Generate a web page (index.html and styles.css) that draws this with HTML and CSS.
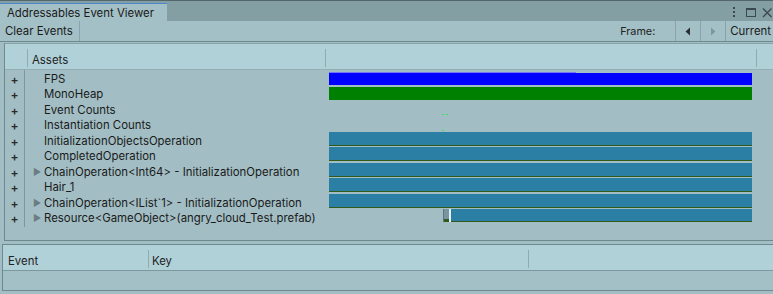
FILE: index.html
```html
<!DOCTYPE html>
<html lang="en">
<head>
    <meta charset="UTF-8">
    <title>Addressables Event Viewer</title>
    <link rel="stylesheet" href="styles.css">
</head>
<body>
    <div class="window">
        <div class="tabbar">
            <div class="tab">Addressables Event Viewer</div>
            <div class="win-controls">
                <svg width="40" height="12" viewBox="0 0 40 12">
                    <rect x="0" y="0" width="2" height="2" fill="#3a4a50"/>
                    <rect x="0" y="4" width="2" height="2" fill="#3a4a50"/>
                    <rect x="0" y="8" width="2" height="2" fill="#3a4a50"/>
                    <rect x="13.5" y="1.5" width="9" height="8" fill="none" stroke="#3a4a50" stroke-width="1"/>
                    <rect x="13" y="1" width="10" height="2" fill="#3a4a50"/>
                    <path d="M30 1.5 L38.5 10 M38.5 1.5 L30 10" stroke="#3a4a50" stroke-width="1.4"/>
                </svg>
            </div>
        </div>

        <div class="toolbar">
            <button class="tb-btn clear">Clear Events</button>
            <div class="spacer"></div>
            <span class="frame-label">Frame:</span>
            <button class="tb-btn tb-arrow">
                <svg width="6" height="9" viewBox="0 0 6 9"><path d="M5 0.5 L0.5 4.5 L5 8.5 Z" fill="#2a2f31"/></svg>
            </button>
            <button class="tb-btn tb-arrow">
                <svg width="6" height="9" viewBox="0 0 6 9"><path d="M1 0.5 L5.5 4.5 L1 8.5 Z" fill="#7d979c"/></svg>
            </button>
            <button class="tb-btn current">Current</button>
        </div>

        <div class="graph-panel">
            <div class="col-header">
                <div class="hcell plus-h"></div>
                <div class="hsep"></div>
                <div class="hcell name-h">Assets</div>
                <div class="hsep"></div>
                <div class="hcell graph-h"></div>
                <div class="hsep"></div>
            </div>
            <div class="graph-body">
                <div class="row">
                    <div class="plus">+</div>
                    <div class="name"><span class="arrow"></span>FPS</div>
                    <div class="graph">
                        <div class="bar fps">
                            <div class="fps-a"></div>
                            <div class="fps-b"></div>
                        </div>
                    </div>
                </div>
                <div class="row">
                    <div class="plus">+</div>
                    <div class="name"><span class="arrow"></span>MonoHeap</div>
                    <div class="graph"><div class="bar heap"></div></div>
                </div>
                <div class="row">
                    <div class="plus">+</div>
                    <div class="name"><span class="arrow"></span>Event Counts</div>
                    <div class="graph ticks">
                        <span class="tick"></span><span class="tick"></span>
                    </div>
                </div>
                <div class="row">
                    <div class="plus">+</div>
                    <div class="name"><span class="arrow"></span>Instantiation Counts</div>
                    <div class="graph ticks">
                        <span class="tick"></span>
                    </div>
                </div>
                <div class="row">
                    <div class="plus">+</div>
                    <div class="name"><span class="arrow"></span>InitializationObjectsOperation</div>
                    <div class="graph"><div class="bar op"></div></div>
                </div>
                <div class="row">
                    <div class="plus">+</div>
                    <div class="name"><span class="arrow"></span>CompletedOperation</div>
                    <div class="graph"><div class="bar op"></div></div>
                </div>
                <div class="row">
                    <div class="plus">+</div>
                    <div class="name"><span class="arrow">&#9654;</span>ChainOperation&lt;Int64&gt; - InitializationOperation</div>
                    <div class="graph"><div class="bar op"></div></div>
                </div>
                <div class="row">
                    <div class="plus">+</div>
                    <div class="name"><span class="arrow"></span>Hair_1</div>
                    <div class="graph"><div class="bar op"></div></div>
                </div>
                <div class="row">
                    <div class="plus">+</div>
                    <div class="name"><span class="arrow">&#9654;</span>ChainOperation&lt;IList`1&gt; - InitializationOperation</div>
                    <div class="graph"><div class="bar op"></div></div>
                </div>
                <div class="row">
                    <div class="plus">+</div>
                    <div class="name"><span class="arrow">&#9654;</span>Resource&lt;GameObject&gt;(angry_cloud_Test.prefab)</div>
                    <div class="graph">
                        <div class="bar load">
                            <div class="load-pending"></div>
                            <div class="load-mark"></div>
                            <div class="load-done"></div>
                        </div>
                    </div>
                </div>
                <div class="row-fill">
                    <div class="plus"></div>
                </div>
            </div>
        </div>

        <div class="event-panel">
            <div class="col-header">
                <div class="hcell event-h">Event</div>
                <div class="hsep"></div>
                <div class="hcell key-h">Key</div>
                <div class="hsep"></div>
            </div>
            <div class="event-body"></div>
        </div>
    </div>
</body>
</html>
```

FILE: styles.css
```css
body {
    margin: 0;
    background-color: #a2bec4;
    font-family: Inter, "Noto Sans", sans-serif;
    font-size: 11.4px;
    color: #1a1a1a;
    overflow: hidden;
}

.window {
    width: 773px;
    height: 294px;
    overflow: hidden;
}

/* tab strip */
.tabbar {
    display: flex;
    height: 20px;
    border-top: 1px solid #52676c;
    background-color: #849fa4;
}

.tab {
    margin-top: 2px;
    height: 16px;
    padding: 1px 13px 0 7px;
    border-top: 1px solid #4d86c9;
    background-color: #a3c0c6;
    line-height: 16px;
    white-space: nowrap;
}

.win-controls {
    margin-left: auto;
    padding: 6px 0 0;
    width: 40px;
}

.win-controls svg {
    display: block;
}

/* toolbar */
.toolbar {
    display: flex;
    align-items: center;
    height: 20px;
    border-bottom: 1px solid #6d8a90;
    background-color: #a3c0c6;
}

.tb-btn {
    height: 20px;
    margin: 0;
    padding: 0 5px;
    border: none;
    background: none;
    font-family: inherit;
    font-size: 11.4px;
    color: #1a1a1a;
    line-height: 20px;
    white-space: nowrap;
}

.clear {
    padding: 0 6px 0 5px;
    border-right: 1px solid #88a4aa;
}

.spacer {
    flex: 1;
}

.frame-label {
    font-size: 10.8px;
    color: #222;
    margin-right: 20px;
}

.tb-arrow {
    display: flex;
    align-items: center;
    justify-content: center;
    width: 25px;
    border-left: 1px solid #88a4aa;
}

.current {
    border-left: 1px solid #88a4aa;
    padding: 0 2px 0 4px;
}

/* column headers */
.col-header {
    display: flex;
    height: 25px;
    background-color: #b1d1d9;
}

.hcell {
    padding-top: 9px;
    line-height: 15px;
    color: #222;
    white-space: nowrap;
}

.hsep {
    align-self: flex-end;
    width: 1px;
    height: 18px;
    margin-bottom: 2px;
    background-color: #8fabb1;
}

/* graph panel */
.graph-panel {
    margin: 1px 0 0 4px;
    border-top: 1px solid #87a3a9;
    border-left: 1px solid #6d8a90;
    border-bottom: 1px solid #6d8a90;
}

.graph-panel .col-header {
    border-bottom: 1px solid #93afb5;
}

.plus-h {
    width: 22px;
}

.name-h {
    width: 293px;
    padding-left: 4px;
}

.graph-h {
    width: 430px;
}

.graph-body {
    height: 170px;
}

.row {
    display: flex;
    height: 15.45px;
}

.row-fill {
    display: flex;
    height: 3px;
}

.plus {
    flex-shrink: 0;
    width: 19px;
    border-right: 1px solid #7c989e;
    text-align: center;
    line-height: 20px;
    font-size: 12px;
    font-weight: 600;
    color: #2a2a2a;
}

.name {
    display: flex;
    flex-shrink: 0;
    width: 292px;
    padding-left: 8px;
    line-height: 18px;
    white-space: nowrap;
}

.arrow {
    flex-shrink: 0;
    width: 11px;
    font-size: 9px;
    line-height: 17px;
    color: #6b7d82;
}

.graph {
    flex-shrink: 0;
    width: 423px;
    padding-left: 4px;
}

/* bars */
.bar {
    height: 13px;
}

.fps {
    display: flex;
    margin-top: 2px;
    height: 12.5px;
}

.fps-a {
    width: 247px;
    border-top: 1px solid #7676f6;
    background-color: #0000ff;
}

.fps-b {
    flex: 1;
    margin-top: 1px;
    background-color: #0000ff;
}

.heap {
    margin-top: 1.5px;
    background-color: #008000;
}

.op {
    border-bottom: 1px solid #2f5a17;
    background-color: #2b7fa5;
}

.ticks {
    display: flex;
    align-items: flex-end;
    padding-left: 117px;
    width: 310px;
    gap: 2px;
}

.tick {
    width: 2px;
    height: 1px;
    margin-bottom: 1px;
    background-color: #3fe05a;
}

.load {
    display: flex;
    margin-left: 114px;
}

.load-pending {
    width: 5px;
    border-left: 1px solid #5d777d;
    background: linear-gradient(to bottom, #7995a0 75%, #2f5a17 75%);
}

.load-mark {
    width: 2px;
    background-color: #dff0f6;
}

.load-done {
    flex: 1;
    border-bottom: 1px solid #2f5a17;
    background-color: #2b7fa5;
}

/* event list */
.event-panel {
    margin: 3px 0 0 2px;
    border-top: 1px solid #6d8a90;
    border-left: 1px solid #6d8a90;
}

.event-panel .col-header {
    border-bottom: 1px solid #7d999f;
}

.event-h {
    width: 140px;
    padding-left: 5px;
}

.key-h {
    width: 376px;
    padding-left: 3px;
}

.event-body {
    height: 19px;
    border-bottom: 1px solid #6d8a90;
    background-color: #a3c0c6;
}
```
